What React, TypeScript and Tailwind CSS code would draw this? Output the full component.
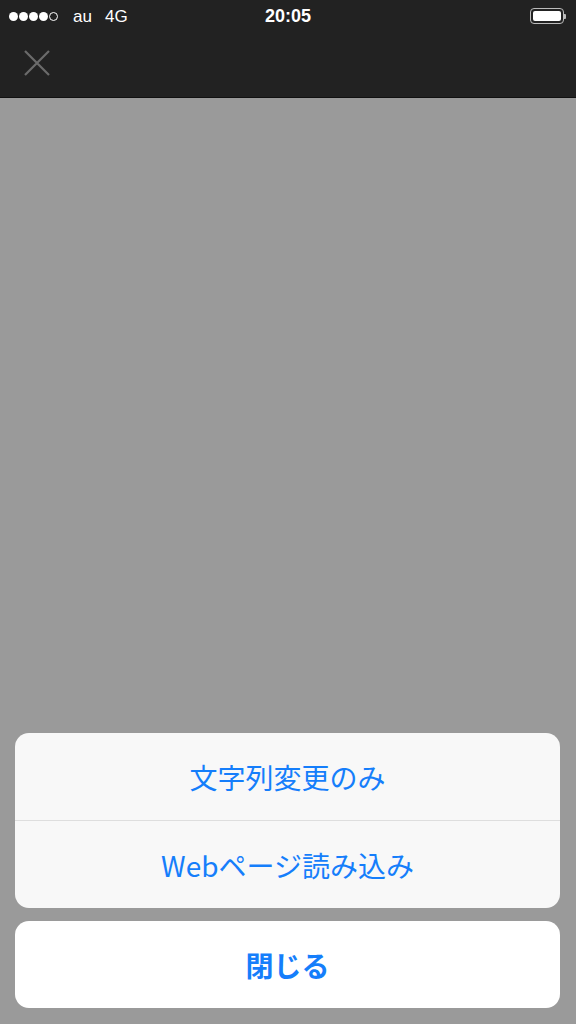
export default function App() {
  const jp = { fontFamily: '"Noto Sans CJK JP", "Noto Sans", sans-serif' };

  return (
    <main className="h-[1024px] w-full bg-[#9a9a9a] flex flex-col overflow-hidden">
      {/* ステータスバー + ナビ */}
      <div className="h-[98px] bg-[#222222] border-b border-[#111111] flex flex-col shrink-0">
        <div
          className="h-[32px] relative flex items-center px-[9px] text-white"
          style={{ fontFamily: '"Liberation Sans", Arial, sans-serif' }}
        >
          <div className="flex items-center gap-[1px]">
            {[0, 1, 2, 3].map((i) => (
              <span key={i} className="w-[9px] h-[9px] rounded-full bg-white" />
            ))}
            <span className="w-[9px] h-[9px] rounded-full border border-white" />
          </div>
          <span className="ml-[15px] text-[17px] leading-none">au</span>
          <span className="ml-[13px] text-[17px] leading-none">4G</span>
          <span className="absolute left-1/2 -translate-x-1/2 text-[18px] font-bold leading-none">
            20:05
          </span>
          <div className="ml-auto mr-[1px] flex items-center">
            <div className="w-[34px] h-[16px] rounded-[4px] border border-[#bbbbbb] p-[2px]">
              <div className="w-full h-full bg-white rounded-[2px]" />
            </div>
            <div className="w-[2px] h-[5px] bg-[#bbbbbb] rounded-r-[1px]" />
          </div>
        </div>
        <div className="flex-1 flex items-center pl-[23px] pb-[3px]">
          <svg width="28" height="28" viewBox="0 0 28 28" fill="none">
            <path d="M2 2 L26 26 M26 2 L2 26" stroke="#6b6b6b" strokeWidth="2.2" />
          </svg>
        </div>
      </div>

      <div className="flex-1" />

      {/* アクションシート */}
      <div className="pl-[15px] pr-[16px] pb-[16px] flex flex-col gap-[13px]" style={jp}>
        <div className="bg-[#f8f8f8] rounded-[14px] overflow-hidden">
          <button className="w-full h-[87px] flex items-center justify-center text-[28px] text-[#157efb]">
            文字列変更のみ
          </button>
          <div className="h-px bg-[#dedede]" />
          <button className="w-full h-[87px] flex items-center justify-center text-[28px] text-[#157efb]">
            Webページ読み込み
          </button>
        </div>
        <button className="w-full h-[87px] bg-white rounded-[14px] flex items-center justify-center text-[28px] font-bold text-[#157efb]">
          閉じる
        </button>
      </div>
    </main>
  );
}
